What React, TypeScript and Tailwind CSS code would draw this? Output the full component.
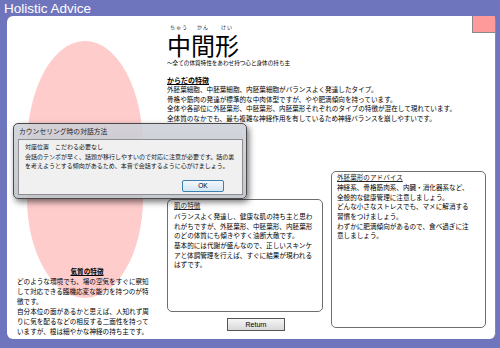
import React from "react";

const jp = "font-['Noto_Sans_CJK_JP',sans-serif]";
const lat = "font-['Liberation_Sans',Arial,sans-serif]";

function Lines({ lines, className }: { lines: string[]; className?: string }) {
  return (
    <div className={className}>
      {lines.map((l, i) => (
        <div key={i} className="whitespace-nowrap">
          {l}
        </div>
      ))}
    </div>
  );
}

export default function App() {
  return (
    <div className={`relative w-[500px] h-[348px] overflow-hidden bg-[#6f75bd] flex flex-col ${jp}`}>
      {/* window title */}
      <div className={`h-[16px] shrink-0 pl-[4px] text-white text-[13.5px] leading-[17px] ${lat}`}>
        Holistic Advice
      </div>

      {/* main white panel */}
      <div className="relative flex-1 ml-[7px] mr-[4px] mb-[9px] bg-white rounded-[6px] border-r border-[#8c8c8c] flex">
        <div className="absolute top-0 right-0 w-[23px] h-[17px] bg-[#ff9a9a] border-l border-b border-[#8a8a8a]" />

        {/* left column */}
        <div className="relative w-[160px] shrink-0 flex flex-col justify-end pl-[10px] pb-[3px]">
          <svg className="absolute left-[20px] top-[25px]" width="116" height="257" viewBox="0 0 116 257">
            <path d="M0,106 A58,106 0 0 1 116,106 L116,157 A58,100 0 0 1 0,157 Z" fill="#ffcccc" />
          </svg>
          <div className="relative text-[6.6px] leading-[10px] text-black">
            <div className="text-center font-bold underline pr-[10px]">気質の特徴</div>
            <Lines
              lines={[
                "どのような環境でも、場の空気をすぐに察知",
                "して対応できる臨機応変な能力を持つのが特",
                "徴です。",
                "自分本位の面があるかと思えば、人知れず周",
                "りに気を配るなどの相反する二面性を持って",
                "いますが、根は細やかな神経の持ち主です。",
              ]}
            />
          </div>
        </div>

        {/* right column */}
        <div className="flex-1 flex flex-col pt-[7px] text-black">
          <div className="flex h-[8px] text-[5px] leading-[8px] text-[#222]">
            <span className="w-[24px] text-center tracking-[1px]">ちゅう</span>
            <span className="w-[24px] text-center tracking-[1px]">かん</span>
            <span className="w-[24px] text-center tracking-[1px]">けい</span>
          </div>
          <div className="mt-[1px] text-[24px] leading-[26px]">中間形</div>
          <div className="text-[5.6px] leading-[10px]">〜全ての体質特性をあわせ持つ心と身体の持ち主</div>
          <div className="mt-[7px] text-[7px] leading-[10px] font-bold underline">からだの特徴</div>
          <Lines
            className="text-[6.6px] leading-[9.7px]"
            lines={[
              "外胚葉細胞、中胚葉細胞、内胚葉細胞がバランスよく発達したタイプ。",
              "骨格や筋肉の発達が標準的な中肉体型ですが、やや肥満傾向を持っています。",
              "全体や各部位に外胚葉形、中胚葉形、内胚葉形それぞれのタイプの特徴が混在して現れています。",
              "全体質のなかでも、最も複雑な神経作用を有しているため神経バランスを崩しやすいです。",
            ]}
          />

          <div className="mt-[47px] flex items-start gap-[8px]">
            <div className="w-[156px] mt-[28px] flex flex-col items-center">
              <div className="w-full h-[113px] border border-[#6e6e6e] rounded-[5px] px-[6px] text-[6.6px] leading-[9.7px]">
                <div className="leading-[10px] underline mb-[2px] text-[#222]">肌の特徴</div>
                <Lines
                  lines={[
                    "バランスよく発達し、健康な肌の持ち主と思わ",
                    "れがちですが、外胚葉形、中胚葉形、内胚葉形",
                    "のどの体質にも傾きやすく油断大敵です。",
                    "基本的には代謝が盛んなので、正しいスキンケ",
                    "アと体調管理を行えば、すぐに結果が現われる",
                    "はずです。",
                  ]}
                />
              </div>
              <button
                className={`mt-[6px] ml-[22px] w-[58px] h-[13px] border border-[#555] bg-gradient-to-b from-[#f6f6f6] to-[#d8d8d8] text-[7px] leading-[11px] text-black ${lat}`}
              >
                Return
              </button>
            </div>

            <div className="w-[155px] h-[157px] border border-[#6e6e6e] rounded-[5px] px-[5px] text-[6.6px] leading-[9.7px]">
              <div className="leading-[10px] underline mb-[1px] text-[#222]">外胚葉形のアドバイス</div>
              <Lines
                lines={[
                  "神経系、骨格筋肉系、内臓・消化器系など、",
                  "全般的な健康管理に注意しましょう。",
                  "どんな小さなストレスでも、マメに解消する",
                  "習慣をつけましょう。",
                  "わずかに肥満傾向があるので、食べ過ぎに注",
                  "意しましょう。",
                ]}
              />
            </div>
          </div>
        </div>
      </div>

      {/* dialog overlay */}
      <div className="absolute left-[13px] top-[123px] w-[234px] h-[76px] z-10 rounded-[5px] border border-[#4a4a4a] bg-gradient-to-b from-[rgba(205,208,216,0.88)] to-[rgba(190,194,202,0.9)] shadow-[2px_3px_6px_rgba(0,0,0,0.55)] flex flex-col">
        <div className="h-[15px] shrink-0 pl-[5px] text-[6.8px] leading-[15px] text-[#1e1e1e]">
          カウンセリング時の対話方法
        </div>
        <div className="flex-1 ml-[4px] mr-[3px] mb-[3px] border border-[#8e8e8e] bg-[#f0f0f0] flex flex-col px-[6px] pt-[2px]">
          <Lines
            className="text-[6px] leading-[9.5px] text-[#111]"
            lines={[
              "対座位置　こだわる必要なし",
              "会話のテンポが早く、話題が移行しやすいので対応に注意が必要です。話の裏",
              "を考えようとする傾向があるため、本音で会話するように心がけましょう。",
            ]}
          />
          <div className="mt-auto mb-[2px] flex justify-end pr-[12px]">
            <button
              className={`w-[42px] h-[12px] rounded-[2px] border border-[#3c7fb1] bg-gradient-to-b from-[#f2f8fc] to-[#d4e6f3] text-[6.5px] leading-[10px] text-black ${lat}`}
            >
              OK
            </button>
          </div>
        </div>
      </div>
    </div>
  );
}
